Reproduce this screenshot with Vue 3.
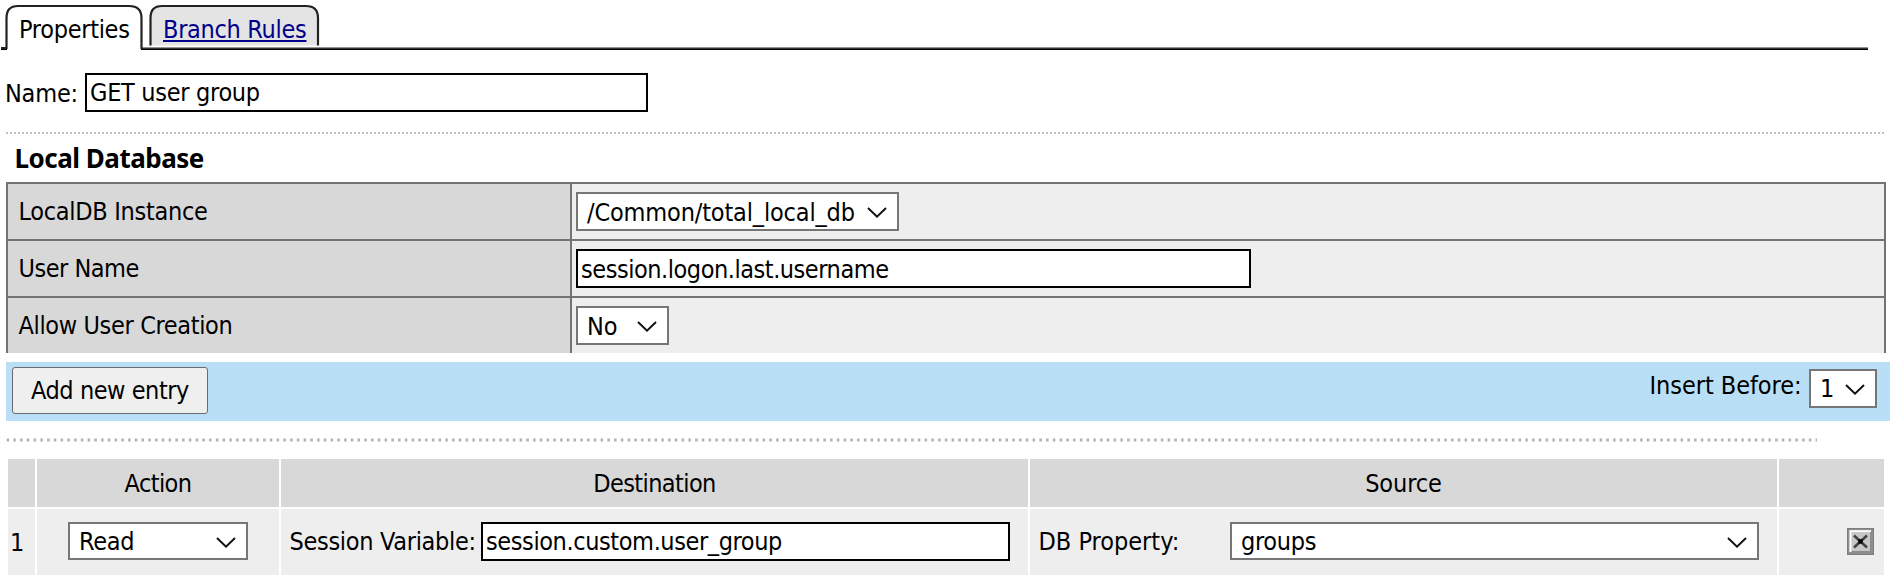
<script setup>
import { ref } from 'vue'

const name = ref('GET user group')
const columns = ['', 'Action', 'Destination', 'Source', '']
</script>

<template>
  <main class="page">
    <nav class="tabs">
      <svg class="tab-art" width="1870" height="52" viewBox="0 0 1870 52" fill="none">
        <path d="M150.5 45.5V18C150.5 10 154 6 162 6H306C314 6 318 10 318 18V45.5Z" fill="#e4e4e4" />
        <path d="M150.5 45.5V18C150.5 10 154 6 162 6H306C314 6 318 10 318 18V45.5" stroke="#222" stroke-width="2.2" />
        <path d="M141 47.5H1868" stroke="#929292" />
        <path d="M141 48.5H1868" stroke="#333" />
        <path d="M141 49.5H1868M1 49.5H7" stroke="#000" />
        <path d="M1 48H6.5V18C6.5 10 10 6 18 6H129C137 6 141.5 10 141.5 18V49" stroke="#222" stroke-width="2.2" />
      </svg>
      <span class="tab current">Properties</span>
      <a class="tab link">Branch Rules</a>
    </nav>

    <div class="name-row">
      <label class="name-label">Name:</label>
      <div class="input name-input">{{ name }}</div>
    </div>
    <div class="rule"></div>

    <h2 class="title">Local Database</h2>
    <section class="settings">
      <div class="row">
        <div class="key k1">LocalDB Instance</div>
        <div class="value">
          <div class="select s-instance">
            <span>/Common/total_local_db</span>
            <svg class="chev" width="20" height="11" viewBox="0 0 20 11"><path d="M1 1L10 9.6L19 1" /></svg>
          </div>
        </div>
      </div>
      <div class="row">
        <div class="key k2">User Name</div>
        <div class="value"><div class="input user-input">session.logon.last.username</div></div>
      </div>
      <div class="row">
        <div class="key k3">Allow User Creation</div>
        <div class="value">
          <div class="select s-no">
            <span>No</span>
            <svg class="chev" width="20" height="11" viewBox="0 0 20 11"><path d="M1 1L10 9.6L19 1" /></svg>
          </div>
        </div>
      </div>
    </section>

    <section class="toolbar">
      <button class="add">Add new entry</button>
      <span class="insert">Insert Before:</span>
      <div class="select s-insert">
        <span>1</span>
        <svg class="chev" width="20" height="11" viewBox="0 0 20 11"><path d="M1 1L10 9.6L19 1" /></svg>
      </div>
    </section>

    <svg class="dots" width="1811" height="4" viewBox="0 0 1811 4">
      <path d="M0.6 2H1811" stroke="#b2b2b2" stroke-width="2.8" stroke-dasharray="2.5 4.25" />
    </svg>

    <section class="entries">
      <div v-for="(c, i) in columns" :key="i" class="head" :class="'h' + i">{{ c }}</div>
      <div class="cell num">1</div>
      <div class="cell action">
        <div class="select s-read">
          <span>Read</span>
          <svg class="chev" width="20" height="11" viewBox="0 0 20 11"><path d="M1 1L10 9.6L19 1" /></svg>
        </div>
      </div>
      <div class="cell dest">
        <span class="label sv">Session Variable:</span>
        <div class="input var-input">session.custom.user_group</div>
      </div>
      <div class="cell src">
        <span class="label db">DB Property:</span>
        <div class="select s-groups">
          <span>groups</span>
          <svg class="chev" width="20" height="11" viewBox="0 0 20 11"><path d="M1 1L10 9.6L19 1" /></svg>
        </div>
      </div>
      <div class="cell del">
        <svg width="27" height="27" viewBox="0 0 27 27">
          <rect width="27" height="27" fill="#7c7c7c" />
          <path d="M1.5 1.5H25.5V25.5H1.5Z" fill="#a6a6a6" />
          <path d="M25.5 1.5V25.5H1.5L4 22.5H22.5V4Z" fill="#8c8c8c" />
          <rect x="4" y="4" width="19" height="19" fill="#c6c6c6" />
          <path d="M3.5 24V3.2H24" fill="none" stroke="#fff" stroke-width="1.8" />
          <path d="M7 7.5L20 19.5M20 7.5L7 19.5" stroke="#444" stroke-width="2.6" />
          <rect x="11.2" y="11.2" width="4.4" height="4.4" fill="#000" />
        </svg>
      </div>
    </section>
  </main>
</template>

<style>
body { background: #fff; }
</style>

<style scoped>
* { box-sizing: border-box; }
.page {
  width: 1894px;
  height: 582px;
  overflow: hidden;
  background: #fff;
  color: #000;
  font-family: "DejaVu Sans Condensed", "DejaVu Sans", sans-serif;
  font-size: 25px;
  font-stretch: condensed;
  line-height: 30px;
  letter-spacing: -0.3px;
  white-space: nowrap;
}
.tabs { position: relative; display: flex; height: 52px; padding: 15px 0 0 19px; }
.tab-art { position: absolute; left: 0; top: 0; }
.tab { position: relative; }
.current { width: 144px; }
.link {
  color: #00008b;
  text-decoration: underline;
  text-decoration-thickness: 2px;
  text-underline-offset: 2px;
  text-decoration-skip-ink: none;
}
.name-row { display: flex; height: 80px; padding: 21px 0 0 5px; }
.name-label { width: 80px; padding-top: 6px; letter-spacing: -0.2px; }
.input { height: 39px; padding: 4px 0 0 3px; background: #fff; border: 2px solid #000; }
.name-input { width: 563px; padding-top: 3px; }
.rule {
  width: 1880px;
  height: 2px;
  margin-left: 6px;
  background: repeating-linear-gradient(90deg, #c0c0c0 0 2px, #fff 2px 4px);
}
.title {
  height: 48px;
  margin: 0;
  padding: 7px 0 0 14.5px;
  font: bold 26px/34px "Noto Sans", sans-serif;
  letter-spacing: -0.5px;
}
.settings { width: 1880px; height: 171px; margin-left: 6px; border: solid #737373; border-width: 0 2px; }
.row { display: grid; grid-template-columns: 562px 2px 1fr; height: 57px; border-top: 2px solid #737373; background: #737373; }
.key { padding: 13px 0 0 10.5px; background: #d8d8d8; }
.k2 { letter-spacing: -0.5px; }
.k3 { letter-spacing: -0.36px; }
.value { grid-column: 3; padding: 8px 0 0 4px; background: #eee; }
.select {
  display: flex;
  justify-content: space-between;
  height: 39px;
  padding: 4px 10.5px 0 9px;
  background: #fff;
  border: 2px solid #767676;
}
.chev { flex: none; margin-top: 9px; fill: none; stroke: #111; stroke-width: 2; }
.s-instance { width: 323px; letter-spacing: -0.16px; }
.s-no { width: 93px; letter-spacing: 0; }
.user-input { width: 675px; letter-spacing: -0.46px; }
.toolbar { display: flex; width: 1884px; height: 59px; margin: 9px 0 0 6px; padding: 5px 13px 0 6px; background: #b9dff6; }
.add {
  width: 196px;
  height: 47px;
  padding: 1px 0 0;
  border: 1px solid #6b6b6b;
  border-radius: 3px;
  background: #efefef;
  color: #000;
  font: inherit;
  letter-spacing: -0.45px;
}
.insert { margin-left: auto; padding-top: 4px; letter-spacing: -0.05px; }
.s-insert { width: 68px; margin: 2px 0 0 7.5px; padding-top: 3px; }
.s-insert .chev { margin-top: 10px; }
.dots { display: block; margin: 17px 0 17px 6px; }
.entries { display: grid; grid-template-columns: 27px 242px 747px 747px 105px; grid-template-rows: 48px 66px; gap: 2px; width: 1876px; margin-left: 8px; }
.head { padding-top: 10px; background: #d8d8d8; text-align: center; letter-spacing: -0.6px; }
.h3 { letter-spacing: -0.1px; }
.cell { display: flex; padding-top: 13px; background: #eee; }
.num { padding: 19px 0 0 2px; }
.action { padding-left: 31px; }
.s-read { width: 180px; height: 38px; padding-top: 3px; }
.cell .chev { margin-top: 10px; }
.label { padding-top: 5px; }
.dest { padding-left: 8.5px; }
.sv { width: 191.5px; }
.var-input { width: 529px; padding-top: 3px; letter-spacing: -0.4px; }
.src { padding-left: 8.5px; }
.db { width: 191.5px; letter-spacing: 0; }
.s-groups { width: 529px; height: 38px; padding-top: 3px; }
.del { padding: 19px 0 0 68px; }
</style>
